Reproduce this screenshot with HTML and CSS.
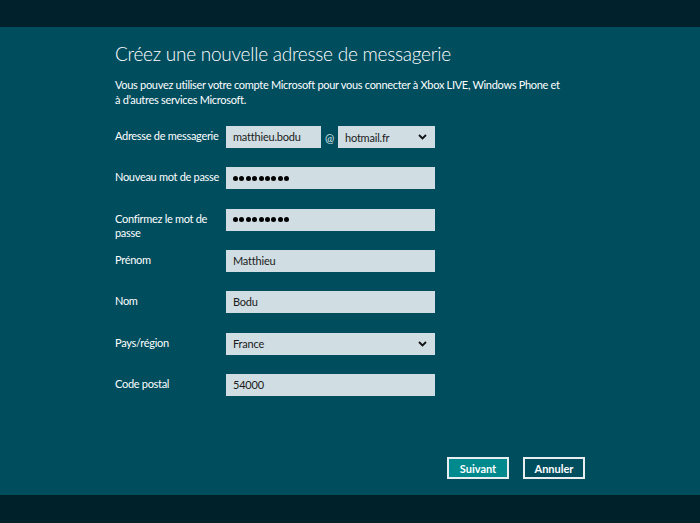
FILE: index.html
```html
<!DOCTYPE html>
<html lang="fr">
<head>
<meta charset="utf-8">
<link rel="stylesheet" href="styles.css">
</head>
<body>
<div class="topbar"></div>
<main class="band">
  <h1 class="title">Créez une nouvelle adresse de messagerie</h1>
  <p class="intro">Vous pouvez utiliser votre compte Microsoft pour vous connecter à Xbox LIVE, Windows Phone et<br>à d’autres services Microsoft.</p>
  <div class="form">
    <div class="label">Adresse de messagerie</div>
    <div class="email">
      <div class="field user">matthieu.bodu</div>
      <span class="at">@</span>
      <div class="field select dom">hotmail.fr
        <svg class="chev" width="9" height="6" viewBox="0 0 9 6"><polyline points="1,1 4.5,4.5 8,1" fill="none" stroke="#111" stroke-width="1.8"/></svg>
      </div>
    </div>

    <div class="label">Nouveau mot de passe</div>
    <div class="field pw" aria-label="mot de passe masqué"><i></i><i></i><i></i><i></i><i></i><i></i><i></i><i></i><i></i></div>

    <div class="label wrap">Confirmez le mot de passe</div>
    <div class="field pw" aria-label="mot de passe masqué"><i></i><i></i><i></i><i></i><i></i><i></i><i></i><i></i><i></i></div>

    <div class="label">Prénom</div>
    <div class="field">Matthieu</div>

    <div class="label">Nom</div>
    <div class="field">Bodu</div>

    <div class="label">Pays/région</div>
    <div class="field select">France
      <svg class="chev" width="9" height="6" viewBox="0 0 9 6"><polyline points="1,1 4.5,4.5 8,1" fill="none" stroke="#111" stroke-width="1.8"/></svg>
    </div>

    <div class="label">Code postal</div>
    <div class="field">54000</div>
  </div>
  <div class="actions">
    <button class="btn primary">Suivant</button>
    <button class="btn">Annuler</button>
  </div>
</main>
<div class="bottombar"></div>
</body>
</html>
```
FILE: styles.css
```css
html, body {
  margin: 0;
  padding: 0;
}
body {
  width: 700px;
  height: 523px;
  background: #01212a;
  font-family: Lato, "Open Sans", sans-serif;
  color: #ffffff;
  overflow: hidden;
}
.topbar {
  height: 27px;
  background: #01222c;
}
.band {
  height: 468px;
  background: #004d5e;
  box-sizing: border-box;
  padding: 14px 0 0 115px;
  position: relative;
}
.title {
  margin: 0;
  font-weight: 300;
  font-size: 19px;
  line-height: 26px;
  letter-spacing: -0.25px;
}
.intro {
  margin: 10px 0 0;
  width: 460px;
  font-size: 11px;
  line-height: 15px;
  letter-spacing: -0.3px;
}
.form {
  margin-top: 19px;
  display: grid;
  grid-template-columns: 111px 209px;
  grid-auto-rows: 22px;
  row-gap: 19.33px;
}
.label {
  font-size: 11px;
  line-height: 14px;
  padding-top: 3px;
  white-space: nowrap;
  letter-spacing: -0.3px;
}
.label.wrap {
  white-space: normal;
  width: 104px;
}
.field {
  background: #d0dee3;
  color: #1a1a1a;
  font-size: 11px;
  height: 22px;
  line-height: 22px;
  padding-left: 7px;
  box-sizing: border-box;
  letter-spacing: -0.2px;
}
.select {
  display: flex;
  align-items: center;
  justify-content: space-between;
  padding-right: 8px;
  line-height: normal;
}
.email {
  display: flex;
  align-items: center;
}
.user {
  width: 95px;
}
.at {
  width: 17px;
  text-align: center;
  font-size: 11px;
  color: #dfe9ec;
}
.dom {
  width: 97px;
}
.pw {
  display: flex;
  align-items: center;
  gap: 1.4px;
}
.pw i {
  display: block;
  width: 5px;
  height: 5px;
  border-radius: 50%;
  background: #000;
}
.actions {
  position: absolute;
  left: 447px;
  top: 430px;
  display: flex;
  gap: 14px;
}
.btn {
  height: 22px;
  width: 62px;
  border: 2px solid #e8eef0;
  background: #004d5e;
  color: #ffffff;
  font-family: Lato, sans-serif;
  font-size: 11px;
  font-weight: 700;
  padding: 0;
}
.btn.primary {
  background: #008a8e;
}
.bottombar {
  height: 28px;
  background: #01212a;
}
```
